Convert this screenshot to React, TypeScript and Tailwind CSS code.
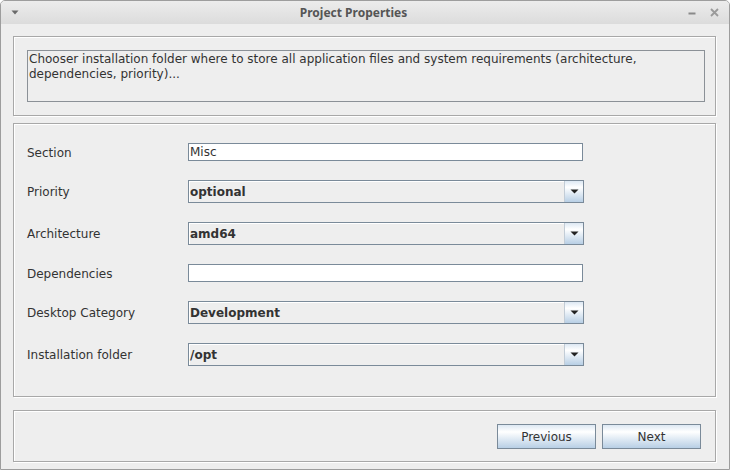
import React from 'react'

const FONT = "font-['DejaVu_Sans','Liberation_Sans',sans-serif]"

function TextField({ value }: { value: string }) {
  return (
    <div className="w-[395px] h-[18px] bg-white border border-[#7a8a99] flex items-center px-[1px] text-[12px] text-[#333333] leading-none">
      {value}
    </div>
  )
}

function Combo({ value }: { value: string }) {
  return (
    <div className="w-[396px] h-[23px] border border-[#7a8a99] bg-[#eeeeee] flex">
      <div className="flex-1 flex items-center pl-[1px] font-bold text-[12px] text-[#333333] shadow-[inset_1px_1px_0_#ffffff]">
        {value}
      </div>
      <div className="w-[19px] border-l border-[#c2ccd6] bg-linear-to-b from-[#dde8f3] via-white via-30% to-[#b8cfe5] flex items-center justify-center">
        <svg width="9" height="5" viewBox="0 0 9 5">
          <path d="M0.5 0.5 H8.5 L4.5 4.5 Z" fill="#222" />
        </svg>
      </div>
    </div>
  )
}

function Panel({ className, children }: { className: string; children?: React.ReactNode }) {
  return (
    <div
      className={`w-[703px] border border-[#a8a8a8] shadow-[inset_1px_1px_0_#ffffff,1px_1px_0_#ffffff] ${className}`}
    >
      {children}
    </div>
  )
}

function Button({ label }: { label: string }) {
  return (
    <button className="w-[99px] h-[25px] border border-[#7a8a99] bg-linear-to-b from-[#dde8f3] via-white via-30% to-[#b8cfe5] text-[12px] text-[#333333] flex items-center justify-center">
      {label}
    </button>
  )
}

const rows: { label: string; kind: 'text' | 'combo'; value: string }[] = [
  { label: 'Section', kind: 'text', value: 'Misc' },
  { label: 'Priority', kind: 'combo', value: 'optional' },
  { label: 'Architecture', kind: 'combo', value: 'amd64' },
  { label: 'Dependencies', kind: 'text', value: '' },
  { label: 'Desktop Category', kind: 'combo', value: 'Development' },
  { label: 'Installation folder', kind: 'combo', value: '/opt' },
]

export default function App() {
  return (
    <div className={`w-[730px] h-[470px] bg-white ${FONT}`}>
      <div className="w-[730px] h-[470px] border border-[#9d9d9d] rounded-t-[5px] bg-[#eeeeee] flex flex-col overflow-hidden">
        {/* Title bar */}
        <div className="h-[23px] shrink-0 bg-linear-to-b from-[#ececec] to-[#dcdcdc] flex items-center px-[8px]">
          <svg width="8" height="5" viewBox="0 0 8 5" className="ml-[2px]">
            <path d="M0.5 0.5 H7.5 L4 4.5 Z" fill="#6a6a6a" />
          </svg>
          <div className="flex-1 text-center font-['Noto_Sans',sans-serif] font-bold text-[12px] text-[#555555]">
            Project Properties
          </div>
          <div className="flex items-center gap-[14px] mr-[2px]">
            <svg width="8" height="8" viewBox="0 0 8 8">
              <path d="M0.5 4.5 H7.5" stroke="#8a8a8a" strokeWidth="2" />
            </svg>
            <svg width="9" height="9" viewBox="0 0 9 9">
              <path d="M1 1 L8 8 M8 1 L1 8" stroke="#9a9a9a" strokeWidth="1.8" />
            </svg>
          </div>
        </div>

        <div className="flex flex-col pl-[12px] pt-[12px]">
          {/* Description */}
          <Panel className="h-[80px] pl-[13px] pr-[10px] pt-[13px]">
            <div className="h-[52px] border border-[#8b9197] pl-[1px] pt-[1px] text-[12px] leading-[15px] text-[#333333]">
              Chooser installation folder where to store all application files and system requirements (architecture,
              dependencies, priority)...
            </div>
          </Panel>

          {/* Properties form */}
          <Panel className="h-[274px] mt-[7px] pl-[13px] pt-[19px]">
            <div className="flex flex-col gap-[19px]">
              {rows.map((r) => (
                <div key={r.label} className={`flex items-center ${r.kind === 'text' ? 'h-[18px]' : 'h-[23px]'}`}>
                  <div className="w-[161px] text-[12px] text-[#333333] pt-[1px]">{r.label}</div>
                  {r.kind === 'text' ? <TextField value={r.value} /> : <Combo value={r.value} />}
                </div>
              ))}
            </div>
          </Panel>

          {/* Buttons */}
          <Panel className="h-[52px] mt-[13px] flex justify-end items-start pt-[13px] pr-[14px] gap-[6px]">
            <Button label="Previous" />
            <Button label="Next" />
          </Panel>
        </div>
      </div>
    </div>
  )
}
